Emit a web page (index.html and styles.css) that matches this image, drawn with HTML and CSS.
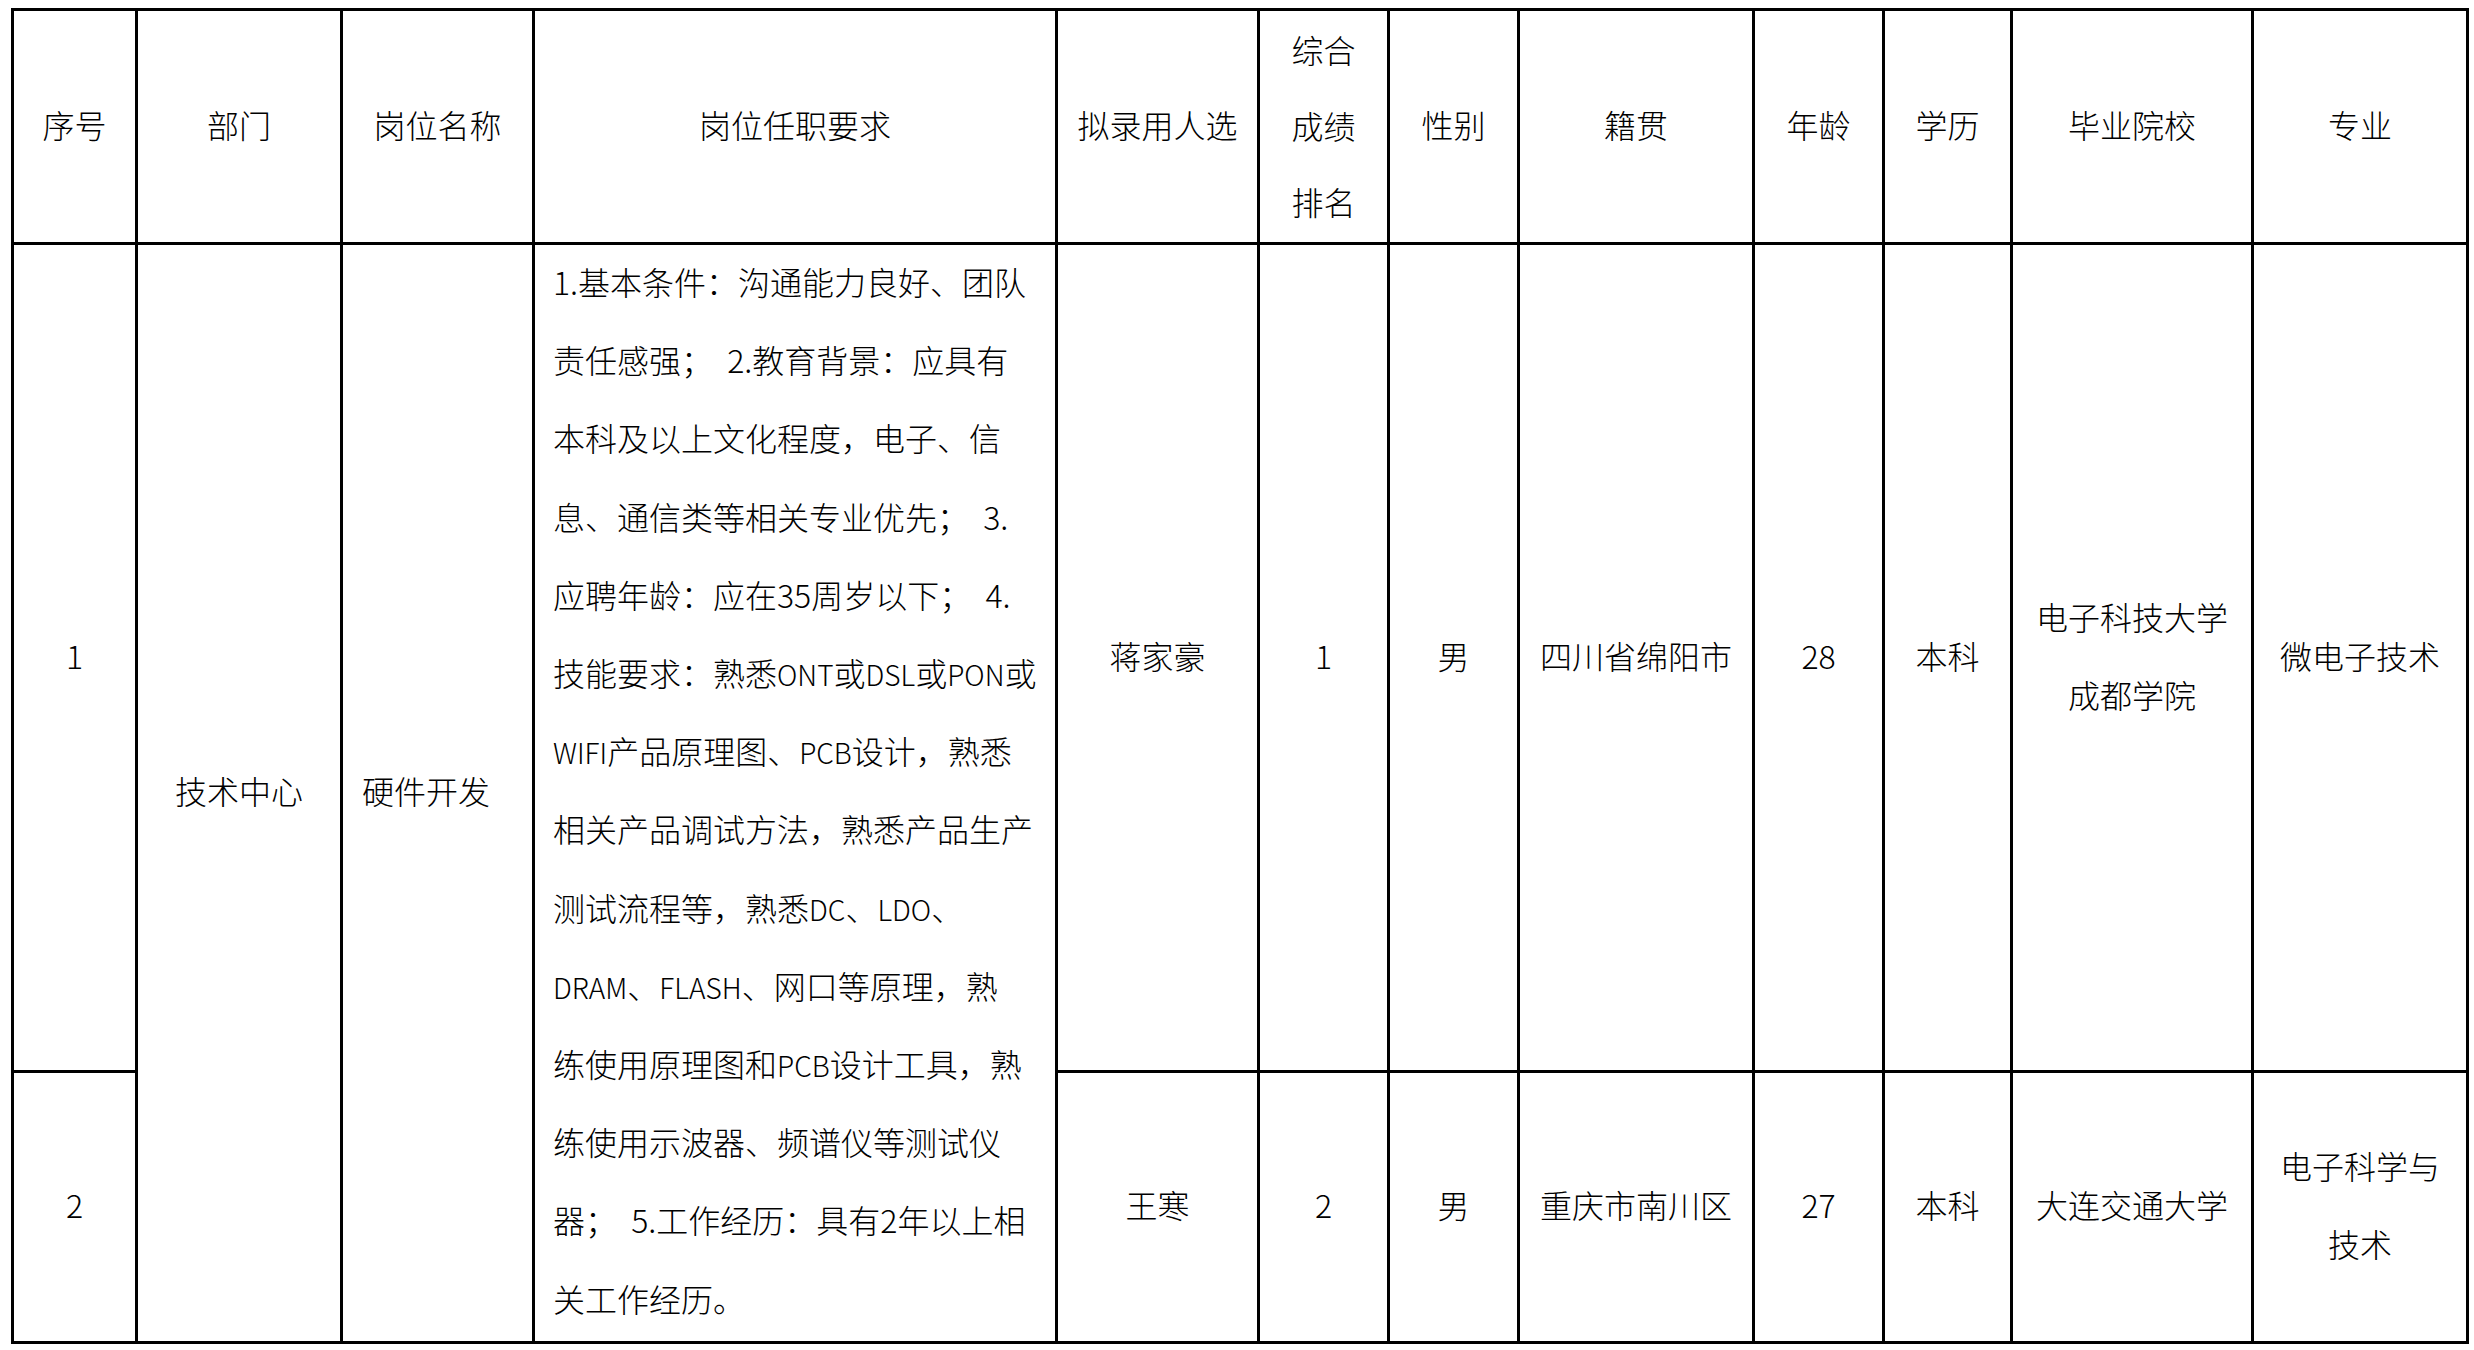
FILE: index.html
```html
<!DOCTYPE html>
<html lang="zh-CN">
<head>
<meta charset="utf-8">
<title>拟录用人选公示</title>
<link rel="stylesheet" href="styles.css">
</head>
<body>
<table class="sheet">
  <colgroup>
    <col class="c-no">
    <col class="c-dept">
    <col class="c-post">
    <col class="c-req">
    <col class="c-name">
    <col class="c-rank">
    <col class="c-sex">
    <col class="c-home">
    <col class="c-age">
    <col class="c-edu">
    <col class="c-school">
    <col class="c-major">
  </colgroup>
  <thead>
    <tr class="head-row">
      <th>序号</th>
      <th>部门</th>
      <th>岗位名称</th>
      <th>岗位任职要求</th>
      <th>拟录用人选</th>
      <th class="stack">综合<br>成绩<br>排名</th>
      <th>性别</th>
      <th>籍贯</th>
      <th>年龄</th>
      <th>学历</th>
      <th>毕业院校</th>
      <th>专业</th>
    </tr>
  </thead>
  <tbody>
    <tr class="row-1">
      <td>1</td>
      <td rowspan="2">技术中心</td>
      <td rowspan="2" class="left">硬件开发</td>
      <td rowspan="2" class="req"><div class="req-text">1.基本条件：沟通能力良好、团队<br>责任感强；&nbsp;&nbsp;2.教育背景：应具有<br>本科及以上文化程度，电子、信<br>息、通信类等相关专业优先；&nbsp;&nbsp;3.<br>应聘年龄：应在35周岁以下；&nbsp;&nbsp;4.<br>技能要求：熟悉<span class="lat">ONT</span>或<span class="lat">DSL</span>或<span class="lat">PON</span>或<br><span class="lat">WIFI</span>产品原理图、<span class="lat">PCB</span>设计，熟悉<br>相关产品调试方法，熟悉产品生产<br>测试流程等，熟悉<span class="lat">DC</span>、<span class="lat">LDO</span>、<br><span class="lat">DRAM</span>、<span class="lat">FLASH</span>、网口等原理，熟<br>练使用原理图和<span class="lat">PCB</span>设计工具，熟<br>练使用示波器、频谱仪等测试仪<br>器；&nbsp;&nbsp;5.工作经历：具有2年以上相<br>关工作经历。</div></td>
      <td>蒋家豪</td>
      <td>1</td>
      <td>男</td>
      <td>四川省绵阳市</td>
      <td>28</td>
      <td>本科</td>
      <td>电子科技大学<br>成都学院</td>
      <td>微电子技术</td>
    </tr>
    <tr class="row-2">
      <td>2</td>
      <td>王寒</td>
      <td>2</td>
      <td>男</td>
      <td>重庆市南川区</td>
      <td>27</td>
      <td>本科</td>
      <td>大连交通大学</td>
      <td>电子科学与<br>技术</td>
    </tr>
  </tbody>
</table>
</body>
</html>
```

FILE: styles.css
```css
html, body {
  margin: 0;
  padding: 0;
  background: #ffffff;
}

body {
  font-family: "Noto Sans CJK SC", "Noto Sans", sans-serif;
  font-size: 32px;
  font-weight: 300;
  color: #000000;
}

.sheet {
  margin: 8px 0 0 11px;
  width: 2458px;
  table-layout: fixed;
  border-collapse: separate;
  border-spacing: 0;
  border-top: 3px solid #000;
  border-left: 3px solid #000;
}

.c-no { width: 124px; }
.c-dept { width: 205px; }
.c-post { width: 192px; }
.c-req { width: 523px; }
.c-name { width: 202px; }
.c-rank { width: 130px; }
.c-sex { width: 130px; }
.c-home { width: 235px; }
.c-age { width: 130px; }
.c-edu { width: 128px; }
.c-school { width: 241px; }
.c-major { width: 215px; }

.sheet th,
.sheet td {
  border-right: 3px solid #000;
  border-bottom: 3px solid #000;
  padding: 0 19px 6px;
  text-align: center;
  vertical-align: middle;
  font-weight: 300;
  line-height: 78px;
  white-space: nowrap;
  overflow: visible;
}

.head-row { height: 234px; }
.row-1 { height: 828px; }
.row-2 { height: 271px; }

.sheet th.stack {
  line-height: 76px;
  padding: 0 0 3px;
}

.sheet td.left {
  text-align: left;
}

.sheet td.req {
  text-align: left;
  vertical-align: top;
  padding: 0 0 0 18px;
}

.req-text {
  line-height: 78.2px;
  margin-top: -3px;
}

.lat {
  font-size: 28px;
  line-height: 1;
}
```
